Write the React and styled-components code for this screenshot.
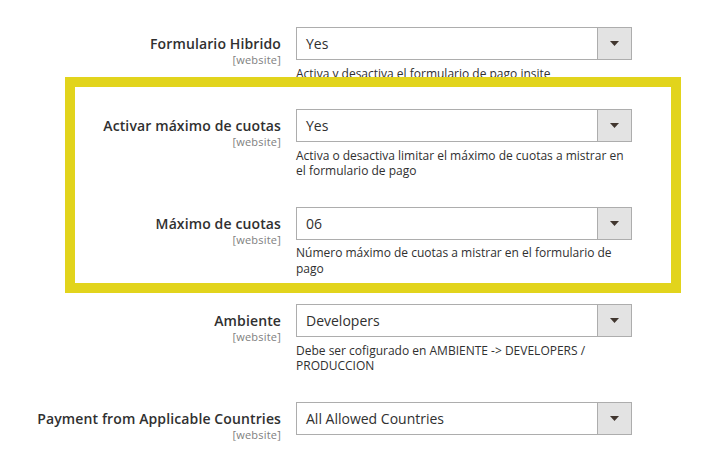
import React from "react";
import styled, { createGlobalStyle } from "styled-components";

const Global = createGlobalStyle`
  html, body { margin: 0; padding: 0; background: #fff; }
  body { font-family: "Open Sans", "Liberation Sans", sans-serif; color: #303030; }
  * { box-sizing: border-box; }
`;

const Page = styled.div`
  position: relative;
  width: 703px;
  height: 449px;
  overflow: hidden;
  padding-top: 27px;
`;

const Fields = styled.div`
  display: flex;
  flex-direction: column;
  gap: 28px;
`;

const Row = styled.div`
  display: grid;
  grid-template-columns: 281px 336px;
  column-gap: 15px;
  align-items: start;
`;

const Label = styled.div`
  text-align: right;
  padding-top: 8px;
`;

const LabelText = styled.div`
  font-size: 14px;
  font-weight: 600;
  line-height: 18px;
  letter-spacing: 0.12px;
  color: #303030;
`;

const Scope = styled.div`
  font-size: 11px;
  line-height: 13px;
  letter-spacing: 0.2px;
  color: #808080;
`;

const Control = styled.div`
  display: flex;
  flex-direction: column;
`;

const Select = styled.div`
  display: flex;
  height: 33px;
  border: 1px solid #adadad;
  background: #fff;
`;

const Value = styled.div`
  flex: 1;
  padding-left: 9px;
  font-size: 14px;
  line-height: 31px;
  color: #303030;
`;

const ArrowBox = styled.div`
  width: 34px;
  background: #e3e3e3;
  border-left: 1px solid #adadad;
  display: flex;
  align-items: center;
  justify-content: center;
`;

const Note = styled.div`
  margin-top: 5.5px;
  font-size: 12px;
  line-height: 15.5px;
  color: #303030;
`;

const Highlight = styled.div`
  position: absolute;
  left: 65px;
  top: 77px;
  width: 616px;
  height: 216px;
  border: 10px solid #e2d41c;
  pointer-events: none;
`;

const Arrow = () => (
  <svg width="9" height="5" viewBox="0 0 9 5">
    <path d="M0 0H9L4.5 5Z" fill="#41362f" />
  </svg>
);

const fields = [
  { label: "Formulario Hibrido", value: "Yes", note: "Activa y desactiva el formulario de pago insite" },
  {
    label: "Activar máximo de cuotas",
    value: "Yes",
    note: "Activa o desactiva limitar el máximo de cuotas a mistrar en el formulario de pago",
  },
  {
    label: "Máximo de cuotas",
    value: "06",
    note: "Número máximo de cuotas a mistrar en el formulario de pago",
  },
  {
    label: "Ambiente",
    value: "Developers",
    note: "Debe ser cofigurado en AMBIENTE -> DEVELOPERS / PRODUCCION",
  },
  { label: "Payment from Applicable Countries", value: "All Allowed Countries" },
];

export default function App() {
  return (
    <>
      <Global />
      <Page>
        <Fields>
          {fields.map((f) => (
            <Row key={f.label}>
              <Label>
                <LabelText>{f.label}</LabelText>
                <Scope>[website]</Scope>
              </Label>
              <Control>
                <Select>
                  <Value>{f.value}</Value>
                  <ArrowBox>
                    <Arrow />
                  </ArrowBox>
                </Select>
                {f.note && <Note>{f.note}</Note>}
              </Control>
            </Row>
          ))}
        </Fields>
        <Highlight />
      </Page>
    </>
  );
}
